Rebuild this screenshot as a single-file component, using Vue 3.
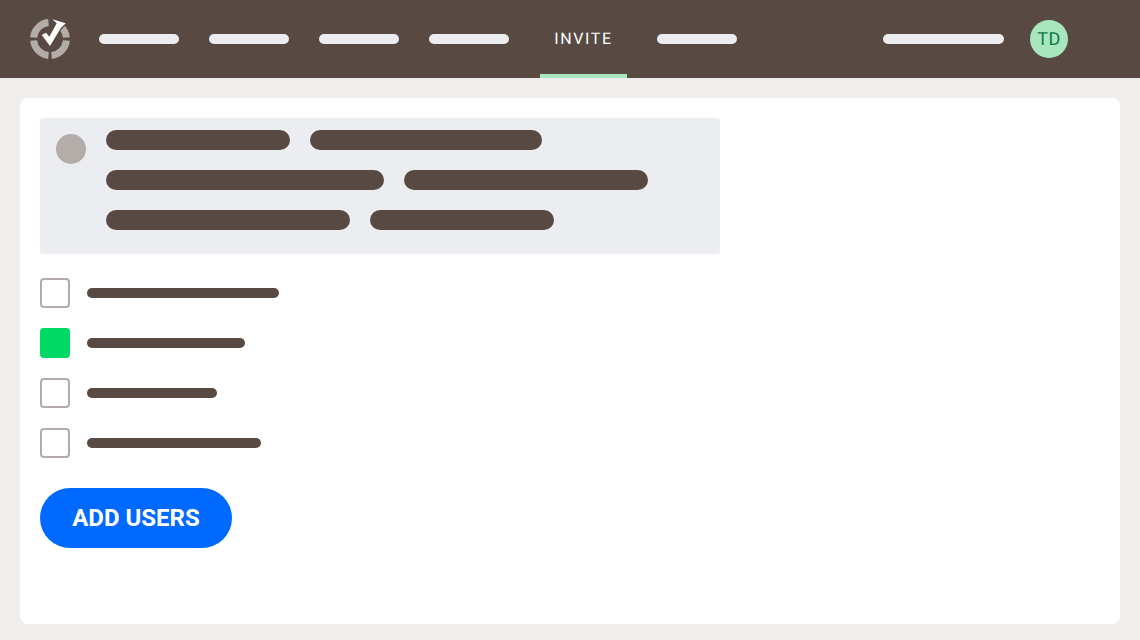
<script setup>
const navBars = [1, 2, 3, 4]
const textRows = [
  [184, 232],
  [278, 244],
  [244, 184],
]
const options = [
  { width: 192, checked: false },
  { width: 158, checked: true },
  { width: 130, checked: false },
  { width: 174, checked: false },
]
</script>

<template>
  <div class="page">
    <header class="topbar">
      <svg class="logo" width="40" height="40" viewBox="0 0 40 40" aria-hidden="true">
        <g fill="none" stroke="#b3aca8" stroke-width="7">
          <path d="M3.6 18.5A16.5 16.5 0 0 1 18.5 3.6" />
          <path d="M36.4 18.5A16.5 16.5 0 0 0 30 7" />
          <path d="M3.6 21.5A16.5 16.5 0 0 0 18.5 36.4" />
          <path d="M36.4 21.5A16.5 16.5 0 0 1 21.5 36.4" />
        </g>
        <path class="check" d="M22.3 0.3L35.7 4.3L30.7 9.3L20 27L11.7 16L16 13.7L19.3 17.7L26.7 4.3Z" />
      </svg>
      <nav class="nav">
        <span v-for="n in navBars" :key="n" class="nav-bar"></span>
        <a class="tab">INVITE</a>
        <span class="nav-bar"></span>
      </nav>
      <div class="account">
        <span class="account-bar"></span>
        <span class="avatar">TD</span>
      </div>
    </header>

    <main class="card">
      <section class="notice">
        <span class="notice-dot"></span>
        <div class="notice-text">
          <div v-for="(row, i) in textRows" :key="i" class="notice-row">
            <span v-for="w in row" :key="w" class="notice-bar" :style="{ width: w + 'px' }"></span>
          </div>
        </div>
      </section>

      <ul class="options">
        <li v-for="(o, i) in options" :key="i" class="option">
          <span class="box" :class="{ checked: o.checked }"></span>
          <span class="option-bar" :style="{ width: o.width + 'px' }"></span>
        </li>
      </ul>

      <button class="add" type="button">ADD USERS</button>
    </main>
  </div>
</template>

<style>
html, body { margin: 0; background: #efeeec; }
</style>

<style scoped>
.page {
  width: 1140px;
  height: 640px;
  background: #efeeec;
  font-family: Roboto, "Liberation Sans", sans-serif;
  text-rendering: geometricPrecision;
  overflow: hidden;
}
.topbar {
  height: 78px;
  background: #584a43;
  display: flex;
  align-items: center;
  padding: 0 72px 0 30px;
  box-sizing: border-box;
}
.logo { flex: none; overflow: visible; }
.check {
  fill: #fff;
  stroke: #584a43;
  stroke-width: 2.4;
  paint-order: stroke;
  stroke-linejoin: round;
}
.nav {
  display: flex;
  align-items: center;
  gap: 30px;
  margin-left: 29px;
  height: 100%;
}
.nav-bar {
  width: 80px;
  height: 10px;
  border-radius: 5px;
  background: #ecedf1;
}
.tab {
  height: 100%;
  width: 87px;
  margin-left: 1px;
  box-sizing: border-box;
  display: flex;
  align-items: center;
  justify-content: center;
  padding: 3px 0 0;
  color: #fff;
  font-size: 16px;
  font-weight: 400;
  letter-spacing: 1.6px;
  border-bottom: 4px solid #a8e6bf;
}
.account {
  margin-left: auto;
  display: flex;
  align-items: center;
  gap: 26px;
}
.account-bar {
  width: 121px;
  height: 10px;
  border-radius: 5px;
  background: #ecedf1;
}
.avatar {
  width: 38px;
  height: 38px;
  border-radius: 50%;
  background: #a8e6bf;
  color: #0b7a43;
  font-size: 18px;
  letter-spacing: 0.5px;
  display: flex;
  align-items: center;
  justify-content: center;
}
.card {
  margin: 20px 20px 0;
  height: 526px;
  box-sizing: border-box;
  background: #fff;
  border-radius: 8px;
  padding: 20px;
}
.notice {
  width: 680px;
  height: 136px;
  box-sizing: border-box;
  background: #ecedf1;
  border-radius: 3px;
  display: flex;
  padding: 12px 16px;
  gap: 20px;
}
.notice-dot {
  width: 30px;
  height: 30px;
  margin-top: 4px;
  border-radius: 50%;
  background: #b3aca8;
  flex: none;
}
.notice-text {
  display: flex;
  flex-direction: column;
  gap: 20px;
}
.notice-row {
  display: flex;
  gap: 20px;
}
.notice-bar {
  height: 20px;
  border-radius: 10px;
  background: #584a43;
}
.options {
  list-style: none;
  margin: 24px 0 0;
  padding: 0;
  display: flex;
  flex-direction: column;
  gap: 20px;
}
.option {
  display: flex;
  align-items: center;
  gap: 16.5px;
  height: 30px;
}
.box {
  width: 30px;
  height: 30px;
  box-sizing: border-box;
  border: 2px solid #b3aca8;
  border-radius: 4px;
  background: #fff;
}
.box.checked {
  background: #00d964;
  border-color: #00d964;
}
.option-bar {
  height: 10px;
  border-radius: 5px;
  background: #584a43;
}
.add {
  display: block;
  margin-top: 30px;
  width: 192px;
  height: 60px;
  border: 0;
  border-radius: 30px;
  background: #0069ff;
  color: #fff;
  font-family: inherit;
  font-size: 24px;
  font-weight: 700;
  padding: 0;
}
</style>
